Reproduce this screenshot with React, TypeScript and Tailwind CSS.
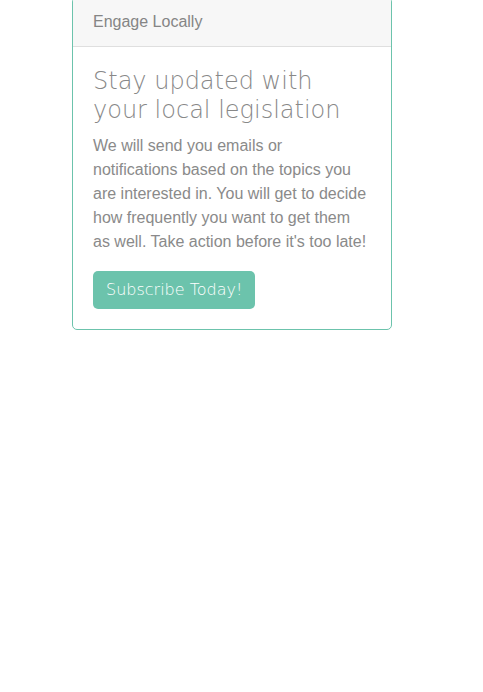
export default function App() {
  return (
    <div className="min-h-screen bg-white font-['Liberation_Sans',Arial,sans-serif]">
      <div className="ml-[72px] mt-[-3px] w-[320px] overflow-hidden rounded-[5px] border border-[#6cc3ac] bg-white">
        {/* Header */}
        <div className="border-b border-[#dfdfdf] bg-[#f7f7f7] px-5 py-3 text-base leading-6 text-[#858585]">
          Engage Locally
        </div>

        <div className="px-5 pt-5 pb-5">
          <h4 className="mb-[9px] font-['DejaVu_Sans',sans-serif] text-[24px] leading-[28.8px] font-light text-[#888888]">
            Stay updated with
            <br />
            your local legislation
          </h4>
          <p className="mb-[17px] text-base leading-6 text-[#8a8a8a]">
            We will send you emails or notifications based on the topics you are interested in. You will get to decide how frequently you want to get them as well. Take action before it's too late!
          </p>
          <button className="block h-[38px] rounded-[5px] bg-[#6cc3ac] px-[13px] font-['DejaVu_Sans',sans-serif] text-[16px] leading-6 font-light text-white">
            Subscribe Today!
          </button>
        </div>
      </div>
    </div>
  );
}
